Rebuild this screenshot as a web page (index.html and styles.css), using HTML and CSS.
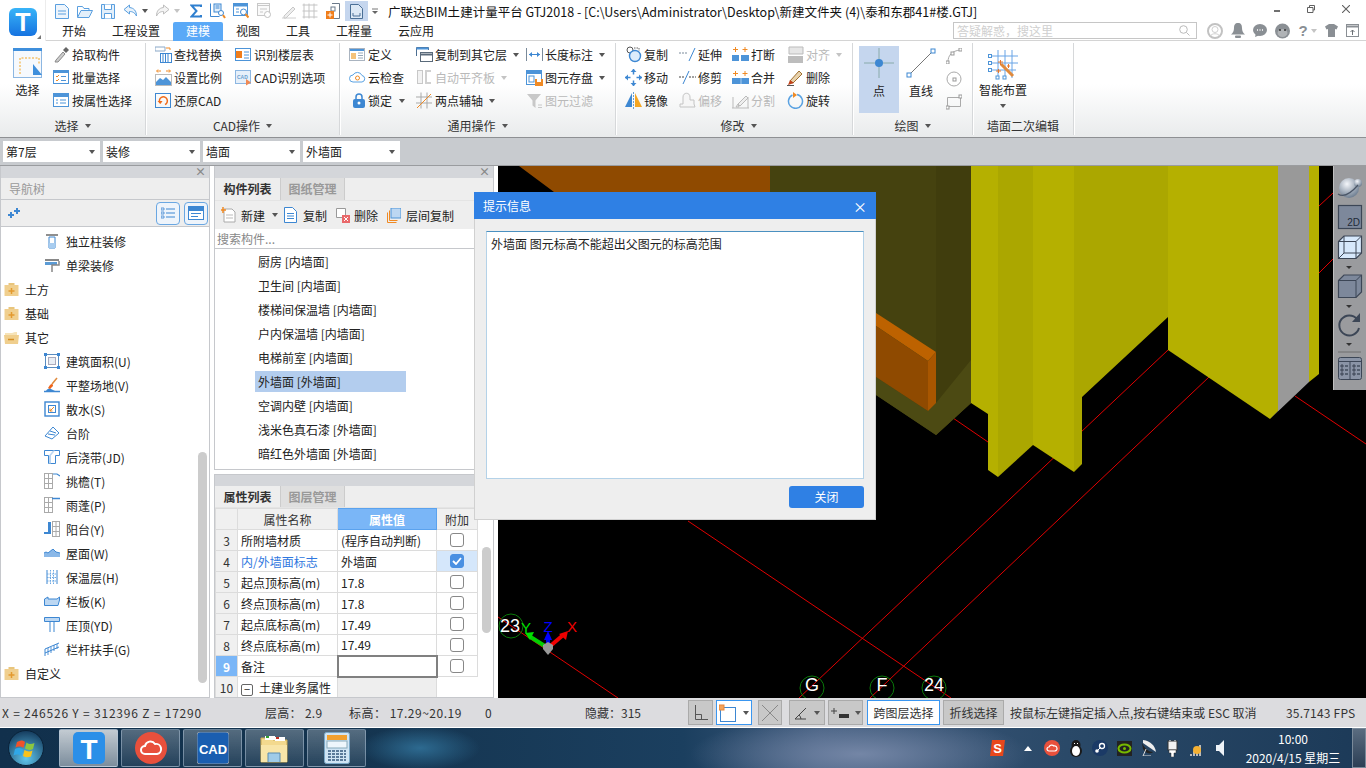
FILE: index.html
```html
<!DOCTYPE html>
<html lang="zh-CN">
<head>
<meta charset="utf-8">
<title>广联达BIM土建计量平台 GTJ2018</title>
<link rel="stylesheet" href="styles.css">
</head>
<body>
<div class="app">

<header class="header">
  <div class="logo">
    <svg width="28" height="28" viewBox="0 0 28 28"><defs><linearGradient id="lg" x1="0" y1="0" x2="0" y2="1"><stop offset="0" stop-color="#38b4f8"/><stop offset="1" stop-color="#1673e0"/></linearGradient></defs><rect width="28" height="28" rx="6" fill="url(#lg)"/><text x="14" y="23" text-anchor="middle" class="logo-t">T</text></svg>
    <i class="logo-corner"></i>
  </div>
  <div class="header-main">
    <div class="title-row">
      <div class="qa">
        <svg width="14" height="15" viewBox="0 0 14 15"><path d="M.5.5h9l4 4v10H.5z" fill="#eef5fc" stroke="#5a9fdf"/><path d="M3 7h8M3 10h8" stroke="#5a9fdf"/></svg>
        <svg width="16" height="15" viewBox="0 0 16 15"><path d="M.5 13V2.500h5l1.500 2h5v2" fill="none" stroke="#5a9fdf"/><path d="M.5 13.500 4 6.500h11.500l-3.500 7z" fill="#e3effa" stroke="#5a9fdf"/></svg>
        <svg width="14" height="15" viewBox="0 0 14 15"><path d="M.5.500h13v14H.5z" fill="#e3effa" stroke="#5a9fdf"/><path d="M3.500.5v5h7v-5M3.500 14.500v-5h7v5" fill="#fff" stroke="#5a9fdf"/></svg>
        <span class="qa-d"><svg width="15" height="14" viewBox="0 0 15 14"><path d="M6.500 1 1 5.500 6.500 10V7.500c3 0 5 1 7 4.500 0-5-2.500-8-7-8.500z" fill="#e8f2fb" stroke="#5a9fdf"/></svg><i class="caret"></i></span>
        <span class="qa-d"><svg width="15" height="14" viewBox="0 0 15 14"><path d="M8.500 1 14 5.500 8.500 10V7.500c-3 0-5 1-7 4.500 0-5 2.500-8 7-8.500z" fill="#f4f4f4" stroke="#bdbdbd"/></svg><i class="caret caret-off"></i></span>
        <svg width="12" height="14" viewBox="0 0 12 14"><path d="M11 3V1.500H1.500L6.500 7l-5 5.500H11V11" fill="none" stroke="#2f7fcf" stroke-width="2"/></svg>
        <svg width="16" height="16" viewBox="0 0 16 16"><path d="M.5.500v13h9" fill="none" stroke="#3d87d2"/><rect x="4" y="1" width="7" height="8" fill="#e3effa" stroke="#3d87d2"/><path d="M5.500 3h4M5.500 5h4" stroke="#3d87d2"/><circle cx="11" cy="10" r="2.500" fill="#fff" stroke="#3d87d2"/><path d="m13 12 2 3" stroke="#f08a24" stroke-width="2"/></svg>
        <svg width="16" height="16" viewBox="0 0 16 16"><rect x=".5" y=".5" width="14" height="12" fill="#fff" stroke="#4d94d8"/><path d="M.5 2h14" stroke="#4d94d8" stroke-width="3"/><path d="M3 6h3M3 9h3" stroke="#4d94d8"/><circle cx="10.500" cy="9" r="3" fill="#fff" stroke="#3d87d2"/><path d="m12.500 11 3 3.500" stroke="#f08a24" stroke-width="2"/></svg>
        <svg width="15" height="16" viewBox="0 0 15 16"><rect x=".5" y=".5" width="12" height="12" fill="#fafafa" stroke="#c8c8c8"/><path d="M.5 2.500h12M3 6h7M3 9h3" stroke="#c8c8c8"/><circle cx="10.500" cy="11.500" r="3" fill="#fff" stroke="#c0c0c0"/></svg>
        <svg width="16" height="15" viewBox="0 0 16 15"><path d="M1 14h14" stroke="#d0d0d0"/><path d="m3 12 9-9 2 2-9 9H3z" fill="#eee" stroke="#c8c8c8"/></svg>
        <svg width="16" height="16" viewBox="0 0 16 16"><path d="M.5 2h15M.5 8h15M.5 14h15M2 .5v15M7 .5v15M12 .5v15" stroke="#c4c4c4" fill="none"/></svg>
        <svg width="14" height="16" viewBox="0 0 14 16"><path d="M6 .5h7.500v15H6" fill="#fff" stroke="#6b7a8a"/><rect x="5" y="4" width="4" height="4" fill="#fff" stroke="#6b7a8a"/><rect y="8" width="8" height="8" fill="#f07d1a"/><path d="M4 9.500v5M1.500 12h5" stroke="#fff"/></svg>
        <span class="qa-on"><svg width="13" height="15" viewBox="0 0 13 15"><path d="M.5.500h8l4 4v10H.5z" fill="#dce8f5" stroke="#4a6f96"/><path d="M3 9v3h7V9" fill="none" stroke="#4a6f96"/></svg></span>
        <svg width="6" height="7" viewBox="0 0 6 7"><path d="M0 1h6" stroke="#777"/><path d="m0 3 3 3 3-3z" fill="#666"/></svg>
      </div>
      <div class="title">广联达BIM土建计量平台 GTJ2018 - [C:\Users\Administrator\Desktop\新建文件夹 (4)\泰和东郡41#楼.GTJ]</div>
      <div class="win">
        <svg width="6" height="8" viewBox="0 0 6 8"><rect y="5" width="6" height="2" fill="#707070"/></svg>
        <svg width="8" height="8" viewBox="0 0 8 8"><path d="M2.500 2V.5h5V5H6M.5 2.500H6v5H.5z" fill="none" stroke="#606060"/></svg>
        <svg width="8" height="8" viewBox="0 0 8 8"><path d="m0 0 8 8M8 0 0 8" stroke="#606060" stroke-width="1.100"/></svg>
      </div>
    </div>
    <div class="tab-row">
      <nav class="tabs">
        <span class="tab">开始</span><span class="tab">工程设置</span><span class="tab tab-on">建模</span><span class="tab">视图</span><span class="tab">工具</span><span class="tab">工程量</span><span class="tab">云应用</span>
      </nav>
      <div class="search"><span>答疑解惑，搜这里</span><svg width="11" height="11" viewBox="0 0 11 11"><circle cx="4.500" cy="4.500" r="3.800" fill="none" stroke="#bbb"/><path d="m7.500 7.500 3 3" stroke="#bbb"/></svg></div>
      <div class="sys">
        <svg width="16" height="16" viewBox="0 0 16 16"><circle cx="8" cy="8" r="7" fill="#fff" stroke="#c2c2c2" stroke-width="2"/><circle cx="8" cy="6.500" r="3" fill="none" stroke="#d0d0d0"/><path d="M3.500 13c1-3 8-3 9 0" fill="none" stroke="#d0d0d0"/></svg>
        <svg width="14" height="15" viewBox="0 0 14 15"><path d="M7 0c3 0 4 2 4 5 0 3 1 5 3 6.500H0C2 10 3 8 3 5c0-3 1-5 4-5z" fill="#8a8f94"/><rect x="4" y="12.500" width="6" height="2.500" rx="1" fill="#8a8f94"/></svg>
        <svg width="14" height="13" viewBox="0 0 14 13"><ellipse cx="7" cy="6" rx="7" ry="6" fill="#8a8f94"/><path d="M3 9 2 13l5-2z" fill="#8a8f94"/><path d="M4 6h1M6.500 6h1M9 6h1" stroke="#fff" stroke-width="1.500"/></svg>
        <svg width="15" height="16" viewBox="0 0 15 16"><circle cx="7.500" cy="8" r="7.500" fill="#8a8f94"/><ellipse cx="7.500" cy="10" rx="5" ry="4" fill="#b0b3b6"/><circle cx="5" cy="7" r="1" fill="#333"/><circle cx="10" cy="7" r="1" fill="#333"/></svg>
        <span class="help">?<i class="caret caret-off"></i></span>
        <svg width="13" height="13" viewBox="0 0 13 13"><path d="M4 0h5l4 2.500-1.500 3L10 5v8H3V5l-1.500.500L0 2.500z" fill="#8a8f94"/></svg>
        <svg width="13" height="13" viewBox="0 0 13 13"><rect x=".5" y=".5" width="12" height="12" fill="#fff" stroke="#8a8f94"/><path d="M.5 2.500h12" stroke="#8a8f94" stroke-width="2"/><path d="M6.500 11V6M4.500 8l2-2 2 2" fill="none" stroke="#6b7075"/></svg>
      </div>
    </div>
  </div>
</header>

<section class="ribbon">
  <div class="group g1">
    <div class="g-body">
      <div class="big b-sel">
        <svg width="29" height="30" viewBox="0 0 29 30"><rect x=".5" y=".5" width="28" height="29" fill="#f6f9fd" stroke="#8db7e2"/><rect width="29" height="3" fill="#3f8fdc"/><path d="M7 26V10h19v6" fill="none" stroke="#f4a623" stroke-dasharray="2 1.500"/><path d="M20 16l9 11h-9z" fill="#3f8fdc"/></svg>
        <span>选择</span>
      </div>
      <div class="col">
        <div class="r"><svg width="17" height="17" viewBox="0 0 17 17"><path d="m3 14 7-8 2 2-7 8H2z" fill="#ccc" stroke="#8a8a8a"/><path d="m10 4 3-3 3 3-3 3z" fill="#666"/></svg><span>拾取构件</span></div>
        <div class="r"><svg width="17" height="17" viewBox="0 0 17 17"><rect x=".5" y="1.500" width="15" height="13" fill="#fff" stroke="#4d94d8"/><path d="M.5 3h15" stroke="#4d94d8" stroke-width="2"/><path d="m3 7 1 1 2-2M3 11l1 1 2-2" fill="none" stroke="#f08a24"/><path d="M8 7.500h5M8 11.500h5" stroke="#4d94d8"/></svg><span>批量选择</span></div>
        <div class="r"><svg width="17" height="17" viewBox="0 0 17 17"><rect x=".5" y="1.500" width="15" height="13" fill="#fff" stroke="#4d94d8"/><path d="M.5 3.500h15" stroke="#4d94d8" stroke-width="3"/><path d="M3 8h2M7 8h6M3 11h2M7 11h6" stroke="#4d94d8"/></svg><span>按属性选择</span></div>
      </div>
    </div>
    <div class="g-label">选择<i class="caret"></i></div>
  </div>

  <div class="group g2">
    <div class="g-body">
      <div class="col c80">
        <div class="r"><svg width="17" height="17" viewBox="0 0 17 17"><path d="M0 1h10v4H0z" fill="#fff" stroke="#8aa8c8"/><path d="M11 2h4v2" fill="none" stroke="#f08a24"/><rect x="5.500" y="7.500" width="11" height="9" fill="#fff" stroke="#3d87d2"/><path d="M8 7.500v9M10.500 7.500v9M13 7.500v9" stroke="#3d87d2"/></svg><span>查找替换</span></div>
        <div class="r"><svg width="17" height="17" viewBox="0 0 17 17"><path d="M2 2h4M11 2h4M3 .5 1.500 2 3 3.500M14 .5 15.500 2 14 3.500" fill="none" stroke="#f08a24"/><rect x=".5" y="5.500" width="16" height="11" fill="#fff" stroke="#bbb"/><path d="M1 16v-3l4-4 3 2 3-3 5 5v3z" fill="#4d94d8"/></svg><span>设置比例</span></div>
        <div class="r"><svg width="17" height="17" viewBox="0 0 17 17"><rect x=".5" y="1.500" width="15" height="14" fill="none" stroke="#3d87d2"/><path d="M5 11a4 4 0 1 1 5 1.500" fill="none" stroke="#f06a1a" stroke-width="1.500"/><path d="m2.500 9 3 3 2-3z" fill="#f06a1a"/></svg><span>还原CAD</span></div>
      </div>
      <div class="col">
        <div class="r"><svg width="17" height="17" viewBox="0 0 17 17"><rect x=".5" y="2.500" width="15" height="12" fill="#fff" stroke="#4d94d8"/><rect x="1" y="5" width="6" height="7" fill="#f07d1a"/><path d="M9 6h5M9 9h5M9 12h5" stroke="#4d94d8"/></svg><span>识别楼层表</span></div>
        <div class="r"><svg width="17" height="17" viewBox="0 0 17 17"><rect x=".5" y="1.500" width="15" height="13" fill="#e6f0fa" stroke="#8db7e2"/><text x="2" y="10" class="mini-t">CAD</text><path d="M11 10l5 3.500-5 3z" fill="#f08a55"/></svg><span>CAD识别选项</span></div>
      </div>
    </div>
    <div class="g-label">CAD操作<i class="caret"></i></div>
  </div>

  <div class="group g3">
    <div class="g-body">
      <div class="col c67">
        <div class="r"><svg width="17" height="17" viewBox="0 0 17 17"><rect x=".5" y="2.500" width="15" height="12" fill="#fff" stroke="#aab4c0"/><path d="M1 4h14" stroke="#4d94d8" stroke-width="2"/><path d="M9 7h5M9 9.500h5M9 12h5" stroke="#9ab"/><rect x="2" y="7" width="5" height="6" fill="#f4c27a"/></svg><span>定义</span></div>
        <div class="r"><svg width="17" height="17" viewBox="0 0 17 17"><path d="M4 13a3.500 3.500 0 0 1 0-7 5 5 0 0 1 9 .5 3.300 3.300 0 0 1 0 6.500z" fill="#fff" stroke="#5aa2e2"/><circle cx="8.500" cy="9" r="2" fill="none" stroke="#f08a24"/></svg><span>云检查</span></div>
        <div class="r r-lock"><svg width="12" height="15" viewBox="0 0 12 15"><path d="M3 7V4a3 3 0 0 1 6 0v3" fill="none" stroke="#3d87d2" stroke-width="1.500"/><rect y="6" width="12" height="9" rx="2" fill="#3d87d2"/><circle cx="6" cy="10" r="1.500" fill="#fff"/></svg><span>锁定</span><i class="caret"></i></div>
      </div>
      <div class="col c110">
        <div class="r"><svg width="17" height="17" viewBox="0 0 17 17"><path d="M.5 10V1.500h12V4" fill="none" stroke="#4d6f92"/><path d="M.5 1.500h12v2H.5z" fill="#4d94d8"/><rect x="4.500" y="6.500" width="12" height="9" fill="#fff" stroke="#5a6a7a"/><path d="M4.500 8.500h12" stroke="#5a6a7a" stroke-width="2"/></svg><span>复制到其它层</span><i class="caret"></i></div>
        <div class="r off"><svg width="17" height="17" viewBox="0 0 17 17"><rect x="1.500" y="1.500" width="5" height="13" fill="#f2f2f2" stroke="#c8c8c8"/><path d="M9 1h6v2h-4v10h4v2H9z" fill="#d0d0d0"/></svg><span>自动平齐板</span><i class="caret caret-off"></i></div>
        <div class="r"><svg width="17" height="17" viewBox="0 0 17 17"><path d="M5 .5v16M11 .5v16M0 5h16M0 11h16" stroke="#a9a9a9"/><path d="M1 16 15 2" stroke="#f08a24"/></svg><span>两点辅轴</span><i class="caret"></i></div>
      </div>
      <div class="col">
        <div class="r"><svg width="17" height="17" viewBox="0 0 17 17"><path d="M.5 2v13M16.500 2v13" stroke="#7a8a9a"/><path d="M3 8.500h11" stroke="#3d87d2"/><path d="m3 8.500 3-2.500v5zM14 8.500 11 6v5z" fill="#3d87d2"/></svg><span>长度标注</span><i class="caret"></i></div>
        <div class="r"><svg width="17" height="17" viewBox="0 0 17 17"><rect x=".5" y="1.500" width="15" height="14" fill="#fff" stroke="#4d94d8"/><path d="M.5 3.500h15" stroke="#4d94d8" stroke-width="3"/><rect x="3" y="7" width="5" height="6" fill="none" stroke="#4d94d8"/><rect x="9" y="10" width="8" height="7" fill="#f08a24"/><rect x="11" y="10" width="4" height="3" fill="#fff"/></svg><span>图元存盘</span><i class="caret"></i></div>
        <div class="r off"><svg width="17" height="17" viewBox="0 0 17 17"><path d="M1 2h14L9.500 8.500V16L6.500 13.500V8.500z" fill="#c8c8c8"/><path d="M12 13h4M12 15.500h4" stroke="#c8c8c8"/></svg><span>图元过滤</span></div>
      </div>
    </div>
    <div class="g-label">通用操作<i class="caret"></i></div>
  </div>

  <div class="group g4">
    <div class="g-body">
      <div class="col c54">
        <div class="r"><svg width="17" height="17" viewBox="0 0 17 17"><circle cx="5" cy="4" r="3" fill="#fff" stroke="#555"/><circle cx="10" cy="10" r="5.500" fill="#dcecfb" stroke="#3d87d2" stroke-width="1.400"/><path d="M9 2h5v3" fill="none" stroke="#666" stroke-dasharray="1.500 1"/></svg><span>复制</span></div>
        <div class="r"><svg width="17" height="17" viewBox="0 0 17 17"><path d="M8.500 0v17M0 8.500h17" stroke="#3d87d2" stroke-width="1.500"/><path d="m8.500 0-3 3h6zM8.500 17l-3-3h6zM0 8.500l3-3v6zM17 8.500l-3-3v6z" fill="#3d87d2"/><rect x="5.500" y="5.500" width="6" height="6" fill="#fff"/></svg><span>移动</span></div>
        <div class="r"><svg width="17" height="17" viewBox="0 0 17 17"><path d="M0 15 7 1v14z" fill="#3d87d2"/><path d="M10 15V1l7 14z" fill="#f5a623"/><path d="M8.500 0v17" stroke="#6a9fd0" stroke-dasharray="2 1"/></svg><span>镜像</span></div>
      </div>
      <div class="col c53">
        <div class="r"><svg width="17" height="17" viewBox="0 0 17 17"><path d="M0 7h9" stroke="#7a8a9a" stroke-dasharray="2 1"/><path d="m10 15 6-13" stroke="#3d87d2"/></svg><span>延伸</span></div>
        <div class="r"><svg width="17" height="17" viewBox="0 0 17 17"><path d="M0 8h5M10 8h7" stroke="#444" stroke-dasharray="2 1"/><path d="m4 15 6-13" stroke="#3d87d2"/></svg><span>修剪</span></div>
        <div class="r off"><svg width="17" height="17" viewBox="0 0 17 17"><path d="M1 15v-3h3V5c0-5 7-5 7 0v3h4v4l1 3z" fill="#f6f6f6" stroke="#c4c4c4"/></svg><span>偏移</span></div>
      </div>
      <div class="col c55">
        <div class="r"><svg width="17" height="17" viewBox="0 0 17 17"><path d="M0 9h7v6H0zM9 9h8v6H9z" fill="#4d94d8"/><path d="M3.500 1v5M1 3.500h5M13 1v5M10.500 3.500h5" stroke="#f08a24"/></svg><span>打断</span></div>
        <div class="r"><svg width="17" height="17" viewBox="0 0 17 17"><path d="M0 9h17v6H0z" fill="#4d94d8"/><path d="M9 9v6" stroke="#a8cdf0"/><path d="M3.500 2v5M1 4.500h5M13 2v5M10.500 4.500h5" stroke="#f08a24"/></svg><span>合并</span></div>
        <div class="r off"><svg width="17" height="17" viewBox="0 0 17 17"><path d="M0 16h17M1 5v11M16 5v11" stroke="#bbb"/><path d="m6 12 1 3h-3zM6 12l8-8 2 2-8 8z" fill="#eee" stroke="#bbb"/></svg><span>分割</span></div>
      </div>
      <div class="col">
        <div class="r off"><svg width="17" height="17" viewBox="0 0 17 17"><path d="M2 1h14v7H2z" fill="#e6e6e6" stroke="#bbb"/><path d="M1 10h15v7H1z" fill="#bdbdbd"/></svg><span>对齐</span><i class="caret caret-off"></i></div>
        <div class="r"><svg width="17" height="17" viewBox="0 0 17 17"><path d="m3 12 9-10 3 3-9 9z" fill="#e8d2ac" stroke="#a07030"/><path d="m1 16 2-5 4 3z" fill="#c0421a"/><path d="M0 16.500h7" stroke="#555"/></svg><span>删除</span></div>
        <div class="r"><svg width="17" height="17" viewBox="0 0 17 17"><path d="M10 2.500A7 7 0 1 1 5.500 3" fill="none" stroke="#5aa2e2" stroke-width="1.500"/><path d="M6 0v6l4-3z" fill="#f08a24"/></svg><span>旋转</span></div>
      </div>
    </div>
    <div class="g-label">修改<i class="caret"></i></div>
  </div>

  <div class="group g5">
    <div class="g-body">
      <div class="big b-pt">
        <svg width="30" height="30" viewBox="0 0 30 30"><path d="M15 0v30M0 15h30" stroke="#8aa" /><circle cx="15" cy="15" r="4" fill="#3d87d2"/></svg>
        <span>点</span>
      </div>
      <div class="big b-line">
        <svg width="30" height="30" viewBox="0 0 30 30"><path d="M3 27 27 3" stroke="#777"/><rect x="25" y="1" width="4" height="4" fill="#fff" stroke="#3d87d2"/><rect x="1" y="25" width="4" height="4" fill="#fff" stroke="#3d87d2"/></svg>
        <span>直线</span>
      </div>
      <div class="col c-geo">
        <svg width="16" height="16" viewBox="0 0 16 16"><path d="M2 14C2 7 6 3 14 2" fill="none" stroke="#aaa"/><rect x="0" y="13" width="3" height="3" fill="#fff" stroke="#999"/><rect x="5" y="4" width="3" height="3" fill="#fff" stroke="#999"/><rect x="13" y="0" width="3" height="3" fill="#fff" stroke="#999"/></svg>
        <svg width="16" height="16" viewBox="0 0 16 16"><circle cx="8" cy="8" r="7" fill="none" stroke="#aaa"/><rect x="7" y="7" width="3" height="3" fill="#fff" stroke="#999"/></svg>
        <svg width="16" height="16" viewBox="0 0 16 16"><path d="M1.500 3.500h13v9h-13z" fill="none" stroke="#aaa"/><rect x="0" y="12" width="3" height="3" fill="#fff" stroke="#999"/><rect x="13" y="1" width="3" height="3" fill="#fff" stroke="#999"/></svg>
      </div>
    </div>
    <div class="g-label">绘图<i class="caret"></i></div>
  </div>

  <div class="group g6">
    <div class="g-body">
      <div class="big b-smart">
        <svg width="30" height="30" viewBox="0 0 30 30"><path d="M10 0v28M17 0v28M24 0v28M2 6h28M2 13h28M2 20h26" stroke="#68a4e6"/><rect x=".5" y="4.500" width="3" height="3" fill="#fff" stroke="#4d94d8"/><rect x=".5" y="11.500" width="3" height="3" fill="#fff" stroke="#4d94d8"/><rect x=".5" y="18.500" width="3" height="3" fill="#fff" stroke="#4d94d8"/><rect x="8" y="26" width="3" height="3" fill="#fff" stroke="#4d94d8"/><rect x="15" y="26" width="3" height="3" fill="#fff" stroke="#4d94d8"/><path d="m13 14 12 12" stroke="#e08a3c" stroke-width="3"/><path d="M10 12h5M12.500 10v5M8 21h5M10.500 19v4M19 16h3M20.500 14v4" stroke="#e8782a"/></svg>
        <span>智能布置</span>
        <i class="caret"></i>
      </div>
    </div>
    <div class="g-label">墙面二次编辑</div>
  </div>
</section>

<section class="selects">
  <div class="sel">第7层<i class="caret"></i></div>
  <div class="sel">装修<i class="caret"></i></div>
  <div class="sel">墙面<i class="caret"></i></div>
  <div class="sel">外墙面<i class="caret"></i></div>
</section>

<main class="main">
  <aside class="nav panel">
    <div class="pane-bar"><span class="x">×</span></div>
    <div class="nav-title">导航树</div>
    <div class="nav-tools">
      <svg class="plus" width="13" height="10" viewBox="0 0 13 10"><path d="M3 4v6M0 7h6M9 0v6M6 3h6" stroke="#3d87d2" stroke-width="2"/></svg>
      <span class="tool-btn"><svg width="14" height="14" viewBox="0 0 14 14"><path d="M0 2h3v2H0zM0 6h3v2H0zM0 10h3v2H0z" fill="none" stroke="#3d87d2" stroke-width=".8"/><path d="M5 3h9M5 7h9M5 11h9" stroke="#3d87d2"/></svg></span>
      <span class="tool-btn"><svg width="16" height="14" viewBox="0 0 16 14"><rect x=".5" y=".5" width="15" height="13" fill="#fff" stroke="#3d87d2"/><path d="M.5 3h15" stroke="#3d87d2" stroke-width="4"/><path d="M3 7.500h10M3 10.500h7" stroke="#3d87d2"/></svg></span>
    </div>
    <div class="tree">
      <div class="t l2"><svg width="16" height="16" viewBox="0 0 16 16"><path d="M2 1h12v2H2z" fill="#8f8f8f"/><path d="M5 4h6v11H5z" fill="#fff" stroke="#3d87d2"/><path d="M5 10h6v5H5z" fill="#a8cdf0"/></svg><span>独立柱装修</span></div>
      <div class="t l2"><svg width="16" height="16" viewBox="0 0 16 16"><path d="M1 2h14v2H1z" fill="#888"/><path d="M1 5h12v3H1z" fill="#5b9bd5"/><path d="M15 4v4H8v7" fill="none" stroke="#888" stroke-width="1.500"/></svg><span>单梁装修</span></div>
      <div class="t l1"><svg width="14" height="13" viewBox="0 0 14 13"><path d="M0 2h14v11H0z" fill="#f0cf8e"/><path d="M4 0h6v2H4z" fill="#e8c57c"/><path d="M7 5v6M4 8h6" stroke="#e39a2f" stroke-width="1.500"/></svg><span>土方</span></div>
      <div class="t l1"><svg width="14" height="13" viewBox="0 0 14 13"><path d="M0 2h14v11H0z" fill="#f0cf8e"/><path d="M4 0h6v2H4z" fill="#e8c57c"/><path d="M7 5v6M4 8h6" stroke="#e39a2f" stroke-width="1.500"/></svg><span>基础</span></div>
      <div class="t l1"><svg width="15" height="13" viewBox="0 0 15 13"><path d="M1 2h7l3-1h2v5H1z" fill="#f6e3b8"/><path d="M0 4h15l-1 9H1z" fill="#f0cf8e"/><path d="M4 8.500h6" stroke="#d68d22" stroke-width="1.500"/></svg><span>其它</span></div>
      <div class="t l2"><svg width="16" height="16" viewBox="0 0 16 16"><rect x="1.500" y="1.500" width="13" height="13" fill="#fff" stroke="#5a8cc0"/><rect x="4.500" y="4.500" width="7" height="7" fill="#e8edf4" stroke="#aab"/><path d="M0 0h3v3H0zM13 0h3v3h-3zM0 13h3v3H0zM13 13h3v3h-3z" fill="#3d87d2"/></svg><span>建筑面积(U)</span></div>
      <div class="t l2"><svg width="16" height="16" viewBox="0 0 16 16"><path d="M0 14.500h16" stroke="#3d87d2" stroke-width="1.500"/><path d="M2 14c1-2 3-3 5-2l4 2z" fill="#3d87d2"/><path d="M6 8c2-2 3-1 3 1L6 12 4 11z" fill="#f0651a"/><path d="m8 7 5-6" stroke="#e08a3c" stroke-width="1.500"/></svg><span>平整场地(V)</span></div>
      <div class="t l2"><svg width="16" height="16" viewBox="0 0 16 16"><rect x="1" y="1" width="14" height="14" fill="none" stroke="#3d87d2" stroke-width="1.400"/><rect x="4.500" y="4.500" width="7" height="7" fill="#fff" stroke="#3d87d2"/><path d="M10 6 6 10M6 7.500V10h2.500" fill="none" stroke="#f08a24"/></svg><span>散水(S)</span></div>
      <div class="t l2"><svg width="16" height="14" viewBox="0 0 16 14"><path d="M1 10 9 1l6 6-7 6z" fill="#fff" stroke="#3d87d2"/><path d="M4 8l7 1M6 5l6 2" stroke="#3d87d2"/></svg><span>台阶</span></div>
      <div class="t l2"><svg width="16" height="16" viewBox="0 0 16 16"><path d="M.5 1.500h15v5h-4v8h-7v-8h-4z" fill="#fff" stroke="#3d87d2"/><path d="M5 6.500 9 1.500h2l-4 5v8H5z" fill="#bcd7f2"/></svg><span>后浇带(JD)</span></div>
      <div class="t l2"><svg width="16" height="16" viewBox="0 0 16 16"><rect x=".5" y=".5" width="8" height="15" fill="#fff" stroke="#aaa"/><path d="M.5 5.500h8M.5 10.500h8M4.500 .5v15" stroke="#aaa"/><path d="M9 1h4l3 2" fill="none" stroke="#3d87d2" stroke-width="1.200"/></svg><span>挑檐(T)</span></div>
      <div class="t l2"><svg width="16" height="16" viewBox="0 0 16 16"><rect x=".5" y=".5" width="8" height="15" fill="#fff" stroke="#aaa"/><path d="M.5 5.500h8M.5 10.500h8M4.500 .5v15" stroke="#aaa"/><path d="M8 1.500h8" stroke="#3d87d2" stroke-width="1.500"/></svg><span>雨蓬(P)</span></div>
      <div class="t l2"><svg width="16" height="16" viewBox="0 0 16 16"><rect x="8.500" y=".5" width="7" height="15" fill="#fff" stroke="#aaa"/><path d="M8.500 5.500h7M8.500 10.500h7M12 .5v15" stroke="#aaa"/><path d="M4 1h3v12H0v-2h4z" fill="#3d87d2"/></svg><span>阳台(Y)</span></div>
      <div class="t l2"><svg width="16" height="8" viewBox="0 0 16 8"><path d="M0 8V4l2-1 2 1 5-4 3 3 4 1v4z" fill="#8ab8e8"/><path d="M0 4l2-1 2 1 5-4 3 3 4 1" fill="none" stroke="#3d87d2"/></svg><span>屋面(W)</span></div>
      <div class="t l2"><svg width="16" height="16" viewBox="0 0 16 16"><path d="M3 1v14M13 1v14" stroke="#3d87d2"/><path d="M6.500 1v14M9.500 1v14M3 5h10M3 8.500h10M3 12h10" stroke="#6aa7e2" stroke-dasharray="1.500 1"/></svg><span>保温层(H)</span></div>
      <div class="t l2"><svg width="16" height="10" viewBox="0 0 16 10"><path d="M.5 3 4 1v2h9l2.500-2v3L14 9.500H.5z" fill="#bcd7f2" stroke="#3d87d2"/></svg><span>栏板(K)</span></div>
      <div class="t l2"><svg width="16" height="16" viewBox="0 0 16 16"><path d="M.5 .5h15v4H.5z" fill="#bcd7f2" stroke="#3d87d2"/><path d="M6 5v10M10 5v10" stroke="#3d87d2"/></svg><span>压顶(YD)</span></div>
      <div class="t l2"><svg width="16" height="16" viewBox="0 0 16 16"><path d="M1 15V8l14-6M1 12l14-6" fill="none" stroke="#3d87d2"/><path d="M4 7v7M7 6v6M10 4v6M13 3v5" stroke="#3d87d2" stroke-width=".9"/></svg><span>栏杆扶手(G)</span></div>
      <div class="t l1 l1b"><svg width="14" height="13" viewBox="0 0 14 13"><path d="M0 2h14v11H0z" fill="#f0cf8e"/><path d="M4 0h6v2H4z" fill="#e8c57c"/><path d="M7 5v6M4 8h6" stroke="#e39a2f" stroke-width="1.500"/></svg><span>自定义</span></div>
      <i class="nav-scroll"></i>
    </div>
  </aside>

  <div class="mid">
    <section class="panel comp">
      <div class="pane-bar"><span class="x">×</span></div>
      <div class="ptabs"><span class="ptab on">构件列表</span><span class="ptab">图纸管理</span></div>
      <div class="ctools">
        <span class="ct ct-new"><svg width="15" height="16" viewBox="0 0 15 16"><path d="M3 2h8l3 3v10H3z" fill="#fff" stroke="#aaa"/><path d="M5 8h7M5 11h7" stroke="#bbb"/><path d="M2 0v6M0 3h5" stroke="#f08a24" stroke-width="1.500"/></svg><span>新建</span><i class="caret"></i></span>
        <span class="ct ct-copy"><svg width="13" height="16" viewBox="0 0 13 16"><path d="M.5 .5h8l4 4v11H.5z" fill="#fff" stroke="#3d87d2"/><path d="M3 6.500h7M3 9h7M3 11.500h7" stroke="#3d87d2"/></svg><span>复制</span></span>
        <span class="ct ct-del"><svg width="14" height="15" viewBox="0 0 14 15"><path d="M.5 .5h9v9h-9z" fill="#fff" stroke="#999"/><rect x="6" y="7" width="8" height="8" fill="#e9686a"/><path d="m8 9 4 4M12 9l-4 4" stroke="#fff"/></svg><span>删除</span></span>
        <span class="ct ct-floor"><svg width="14" height="15" viewBox="0 0 14 15"><path d="M.5 4.500v10h9" fill="none" stroke="#f08a24"/><path d="M2.500 2.500v10h8" fill="none" stroke="#f08a24"/><rect x="4" y="0" width="10" height="10" fill="#bcd7f2" stroke="#4d94d8"/></svg><span>层间复制</span></span>
      </div>
      <div class="csearch">搜索构件...</div>
      <div class="clist">
        <div class="ci">厨房 [内墙面]</div>
        <div class="ci">卫生间 [内墙面]</div>
        <div class="ci">楼梯间保温墙 [内墙面]</div>
        <div class="ci">户内保温墙 [内墙面]</div>
        <div class="ci">电梯前室 [内墙面]</div>
        <div class="ci ci-on">外墙面 [外墙面]</div>
        <div class="ci">空调内壁 [内墙面]</div>
        <div class="ci">浅米色真石漆 [外墙面]</div>
        <div class="ci">暗红色外墙面 [外墙面]</div>
      </div>
    </section>
    <section class="panel props">
      <div class="pane-bar"></div>
      <div class="ptabs"><span class="ptab on">属性列表</span><span class="ptab">图层管理</span></div>
      <div class="tbl-wrap">
        <table class="tbl">
          <thead><tr><th class="n"></th><th>属性名称</th><th class="hv">属性值</th><th>附加</th></tr></thead>
          <tbody>
            <tr><td class="n">3</td><td>所附墙材质</td><td>(程序自动判断)</td><td class="c"><i class="cb"></i></td></tr>
            <tr><td class="n">4</td><td class="link">内/外墙面标志</td><td>外墙面</td><td class="c c-on"><i class="cb cb-on"><svg width="10" height="8" viewBox="0 0 10 8"><path d="m1 4 3 3 5-6" fill="none" stroke="#fff" stroke-width="1.800"/></svg></i></td></tr>
            <tr><td class="n">5</td><td>起点顶标高(m)</td><td>17.8</td><td class="c"><i class="cb"></i></td></tr>
            <tr><td class="n">6</td><td>终点顶标高(m)</td><td>17.8</td><td class="c"><i class="cb"></i></td></tr>
            <tr><td class="n">7</td><td>起点底标高(m)</td><td>17.49</td><td class="c"><i class="cb"></i></td></tr>
            <tr><td class="n">8</td><td>终点底标高(m)</td><td>17.49</td><td class="c"><i class="cb"></i></td></tr>
            <tr><td class="n n-on">9</td><td>备注</td><td class="edit"></td><td class="c"><i class="cb"></i></td></tr>
            <tr><td class="n">10</td><td class="grp"><i class="minus">−</i>土建业务属性</td><td class="gv"></td><td class="blank"></td></tr>
          </tbody>
        </table>
        <i class="tbl-scroll"></i>
      </div>
    </section>
  </div>

  <div class="view">
    <svg class="canvas" viewBox="498 166 868 532" width="868" height="532">
      <g class="red">
        <path d="M1168 350 799 698M1209 377 870 698M688 521 951 698M953 418 988 442M1295 396 1366 444M498 617 618 698M1319 206 1333 193M1319 273 1333 259"/>
      </g>
      <path d="M519 166H770V400H620L554 192z" fill="#8f4a00"/>
      <path d="M770 166H971V403L936 435 876 395V300L770 200z" fill="#45420f"/>
      <path d="M936 166h35v237l-35 32z" fill="#403d0d"/>
      <path d="M876 377 928 411 936 403 971 360V403L936 435 876 395z" fill="#4c4a13"/>
      <path d="M876 313 936 352 928 361 876 326z" fill="#bd6200"/>
      <path d="M876 326 928 361V411L876 377z" fill="#8f4a00"/>
      <path d="M928 361 936 352V403L928 411z" fill="#a85600"/>
      <path d="M971 166H998V477L988 470V414L971 403z" fill="#b5b000"/>
      <path d="M998 166H1033V445L998 477z" fill="#aba700"/>
      <path d="M1033 166H1074V472L1033 445z" fill="#b5b000"/>
      <path d="M1074 166H1168V317L1082 397V464L1074 472z" fill="#aba700"/>
      <path d="M1168 166H1278V411L1270 419 1168 350z" fill="#b5b000"/>
      <path d="M1278 166H1309V382L1270 419 1278 411z" fill="#999"/>
      <path d="M1309 166H1319V374L1309 382z" fill="#b5b000"/>
      <g class="bubble">
        <circle cx="511" cy="626" r="12"/><circle cx="812" cy="688" r="12"/><circle cx="882" cy="688" r="12"/><circle cx="934" cy="688" r="12"/>
      </g>
      <g class="bubble-t">
        <text x="510" y="632">23</text><text x="812" y="691">G</text><text x="882" y="691">F</text><text x="934" y="691">24</text>
      </g>
      <path d="M548 648 529 636" stroke="#00d000" stroke-width="4"/><path d="m525 633 9-1-4 8z" fill="#00e000"/>
      <path d="M548 648 562 636" stroke="#f00000" stroke-width="4"/><path d="m568 631-2 9-7-6z" fill="#f00000"/>
      <path d="M548 648V638" stroke="#0000f0" stroke-width="4"/><path d="m548 631 4 9h-8z" fill="#0000ff"/>
      <path d="m543 645 5-3 5 3v4l-5 6-5-6z" fill="#999"/>
      <text x="526" y="633" class="ax ax-y">Y</text><text x="548" y="632" class="ax ax-z">Z</text><text x="572" y="632" class="ax ax-x">X</text>
    </svg>
    <div class="vtools">
      <svg width="33" height="224" viewBox="0 0 33 224">
        <defs><radialGradient id="sp" cx=".4" cy=".3" r=".8"><stop offset="0" stop-color="#f4f6fa"/><stop offset="1" stop-color="#5d6f84"/></radialGradient></defs>
        <circle cx="15" cy="22" r="10" fill="url(#sp)"/><circle cx="24" cy="17" r="4" fill="url(#sp)"/><path d="M4 28c6 4 14-2 20-9" fill="none" stroke="#4a5566" stroke-width="1.200"/>
        <rect x="4.500" y="39.500" width="23" height="23" fill="#7d889b" stroke="#3c4656" stroke-width="1.200"/><text x="26" y="60" class="v2d">2D</text>
        <path d="M4.500 75.500 10 70h17.500v17L22 92.500H4.500z" fill="#d7e8fb" stroke="#3c4656" stroke-width="1.200"/><path d="M4.500 75.500H22v17M22 75.500l5.500-5.500M10 70v17H27.500M4.500 92.500 10 87" fill="none" stroke="#3c4656"/>
        <path d="m12 100 3 3 3-3z" fill="#333"/>
        <path d="M4.500 114.500 10 109h17.500v17L22 131.500H4.500z" fill="#7d889b" stroke="#3c4656" stroke-width="1.200"/><path d="M4.500 114.500H22v17M22 114.500l5.500-5.500" fill="none" stroke="#3c4656"/>
        <path d="m12 139 3 3 3-3z" fill="#333"/>
        <path d="M23 153a10 10 0 1 0 2 9" fill="none" stroke="#3c4656" stroke-width="2"/><path d="M26 147v9h-8z" fill="#3c4656"/>
        <path d="m12 177 3 3 3-3z" fill="#333"/>
        <path d="M4 186h23" stroke="#6f6f6f"/>
        <rect x="4.500" y="191.500" width="23" height="22" rx="2" fill="#8a94a6" stroke="#3c4656"/><path d="M4.500 195.500h23M16 196v17" stroke="#3c4656"/><path d="M7 199h2v2H7zM7 203h2v2H7zM7 207h2v2H7zM19 199h2v2h-2zM19 203h2v2h-2zM19 207h2v2h-2z" fill="none" stroke="#1f2a38" stroke-width=".7"/><path d="M11 200h3M11 204h3M11 208h3M23 200h3M23 204h3M23 208h3" stroke="#1f2a38"/>
      </svg>
    </div>
  </div>

  <div class="dialog">
    <div class="dlg-title"><span>提示信息</span><span class="dlg-x">×</span></div>
    <div class="dlg-body">外墙面 图元标高不能超出父图元的标高范围</div>
    <div class="dlg-foot"><span class="dlg-btn">关闭</span></div>
  </div>
</main>

<footer class="status">
  <span class="st-xyz">X = 246526 Y = 312396 Z = 17290</span>
  <span class="st-h">层高： 2.9</span>
  <span class="st-b">标高： 17.29~20.19</span>
  <span class="st-0">0</span>
  <span class="st-hide">隐藏：315</span>
  <span class="sb sb1"><svg width="14" height="16" viewBox="0 0 14 16"><path d="M1.500 0v14.500H14M1.500 9.500h6v5" fill="none" stroke="#555"/></svg></span>
  <span class="sb sb2"><svg width="18" height="18" viewBox="0 0 18 18"><rect x="1.500" y="3.500" width="15" height="14" fill="#fff" stroke="#3d87d2"/><rect x="0" y="1" width="5" height="5" fill="#f4a35a" stroke="#e8863a"/></svg><i class="caret"></i></span>
  <span class="sb sb3"><svg width="16" height="16" viewBox="0 0 16 16"><path d="m0 0 16 16M16 0 0 16" stroke="#888"/></svg></span>
  <span class="sb sb4"><svg width="14" height="14" viewBox="0 0 14 14"><path d="M1 13h11M1 13 12 2" stroke="#444" fill="none"/><path d="M7 13a6 6 0 0 0-2-4" stroke="#444" fill="none"/></svg><i class="caret"></i></span>
  <span class="sb sb5"><svg width="18" height="14" viewBox="0 0 18 14"><path d="M3 2v6M0 5h6" stroke="#444"/><rect x="8" y="8" width="10" height="4" fill="#333"/></svg><i class="caret"></i></span>
  <span class="sb sb6">跨图层选择</span>
  <span class="sb sb7">折线选择</span>
  <span class="st-msg">按鼠标左键指定插入点,按右键结束或 ESC 取消</span>
  <span class="st-fps">35.7143 FPS</span>
</footer>

<footer class="taskbar">
  <span class="orb"><svg width="36" height="36" viewBox="0 0 36 36"><defs><radialGradient id="og" cx=".5" cy=".8" r=".8"><stop offset="0" stop-color="#5fc7ef"/><stop offset="1" stop-color="#143a5c"/></radialGradient></defs><circle cx="18" cy="18" r="17.500" fill="url(#og)" stroke="#0a2238"/><path d="M9 12c3-2 6-2 8 0l-1.500 6c-2-1.500-5-2-8-.5z" fill="#f0522a"/><path d="M18.500 12.500c2.500 2 5 2 8 .5l-1.500 6c-3 1.500-5.500 1-8-.5z" fill="#8cc63f"/><path d="M7 19c3-1.500 6-1 8 .5L13.500 26c-2-1.500-5-2-8-.5z" fill="#30a8e8"/><path d="M16.500 20c2.500 1.500 5 2 8 .5l-1.500 6c-3 1-5.500 1-8-.5z" fill="#f8c21c"/></svg></span>
  <span class="tb tb-on"><svg width="32" height="32" viewBox="0 0 32 32"><rect width="32" height="32" rx="5" fill="#2b8fe8"/><text x="16" y="27" text-anchor="middle" class="tb-t">T</text></svg></span>
  <span class="tb"><svg width="32" height="32" viewBox="0 0 32 32"><circle cx="16" cy="16" r="16" fill="#e8503c"/><path d="M10 22a4 4 0 0 1 0-8 5.500 5.500 0 0 1 10-2 5 5 0 0 1 2 10z" fill="none" stroke="#fff" stroke-width="2"/></svg></span>
  <span class="tb"><svg width="32" height="32" viewBox="0 0 32 32"><rect width="32" height="32" rx="3" fill="#1a5eb0" stroke="#8a9aaa"/><text x="16" y="22" text-anchor="middle" class="tb-cad">CAD</text></svg></span>
  <span class="tb"><svg width="30" height="30" viewBox="0 0 30 30"><path d="M1 5h10l2 2h14v22H1z" fill="#f3d98e" stroke="#c8a850"/><path d="M5 3h10v4H5z" fill="#fff"/><path d="M6 3h3v2H6z" fill="#30a030"/><path d="M15 4h10v4H15z" fill="#fff"/><path d="M16 4h3v2h-3z" fill="#c03020"/><path d="M1 12h26v17H1z" fill="#f8e5a8"/><path d="M8 29V20h12v9" fill="#9fcbe8" stroke="#5a8cb0"/></svg></span>
  <span class="tb"><svg width="26" height="32" viewBox="0 0 26 32"><rect x=".5" y=".5" width="25" height="31" rx="2" fill="#cfe4f4" stroke="#7aa8c8"/><rect x="3" y="3" width="20" height="5" fill="#f0a030"/><rect x="3" y="9" width="20" height="7" fill="#eef6fc" stroke="#8ab"/><path d="M4 19h18M4 22h18M4 25h18M4 28h18" stroke="#5a7a9a" stroke-width="2" stroke-dasharray="3 1"/></svg></span>
  <div class="tray">
    <svg class="t-s" width="15" height="16" viewBox="0 0 15 16"><path d="M2 0h13l-2 16H0z" fill="#e8471c"/><text x="7.500" y="13" text-anchor="middle" class="tray-s">S</text></svg>
    <i class="t-arrow"></i>
    <svg width="16" height="16" viewBox="0 0 16 16"><circle cx="8" cy="8" r="8" fill="#e8503c"/><path d="M5 11a2 2 0 0 1 0-4 3 3 0 0 1 5-1 2.500 2.500 0 0 1 1 5z" fill="none" stroke="#fff" stroke-width="1.200"/></svg>
    <svg width="14" height="17" viewBox="0 0 14 17"><ellipse cx="7" cy="5" rx="4.500" ry="5" fill="#1a1a1a"/><ellipse cx="7" cy="11" rx="6" ry="6" fill="#1a1a1a"/><ellipse cx="7" cy="11" rx="4" ry="5" fill="#fff"/><path d="M5 3.500h1M8 3.500h1" stroke="#fff"/></svg>
    <svg width="16" height="16" viewBox="0 0 16 16"><circle cx="8" cy="8" r="8" fill="#1b3a66"/><circle cx="10" cy="6" r="2.500" fill="none" stroke="#fff" stroke-width="1.300"/><circle cx="5" cy="11" r="1.800" fill="#fff"/><path d="m5 11 4-4" stroke="#fff"/></svg>
    <svg width="15" height="15" viewBox="0 0 15 15"><rect width="15" height="15" fill="#222"/><ellipse cx="7.500" cy="7.500" rx="6" ry="4" fill="none" stroke="#76b900" stroke-width="2"/><circle cx="7.500" cy="7.500" r="1.500" fill="#76b900"/></svg>
    <svg width="15" height="16" viewBox="0 0 15 16"><path d="M2 0c8 1 12 6 13 12L2 3z" fill="#eee"/><path d="M1 3c3 6 7 9 11 9-3 3-8 1-10-3z" fill="#222"/><path d="M5 9 2 16h8" fill="none" stroke="#ddd"/></svg>
    <svg width="11" height="17" viewBox="0 0 11 17"><rect x="1" y="1" width="9" height="9" fill="#f2f2f2" stroke="#333"/><path d="M3 1V0M8 1V0" stroke="#fff"/><path d="M2 10h7v3H7v4H4v-4H2z" fill="#fff" stroke="#333" stroke-width=".5"/></svg>
    <svg width="14" height="15" viewBox="0 0 14 15"><path d="M1 13h2v2H1zM4 10h2v5H4zM7 7h2v8H7zM10 4h2v11h-2z" fill="#bbb"/><circle cx="8" cy="9" r="4" fill="#f5b133"/></svg>
    <svg width="8" height="16" viewBox="0 0 8 16"><path d="M0 5h3l5-5v16l-5-5H0z" fill="#eef3f7"/></svg>
  </div>
  <div class="clock"><span>10:00</span><span>2020/4/15 星期三</span></div>
  <i class="show-desk"></i>
</footer>
</div>
</body>
</html>
```

FILE: styles.css
```css
* { box-sizing: border-box; }
html, body { margin: 0; padding: 0; }
body { font-family: "Noto Sans CJK SC", "Noto Sans", sans-serif; font-size: 12px; color: #222; background: #fff; overflow: hidden; }
i { display: block; font-style: normal; }
svg { flex: none; display: block; }
.app { width: 1366px; height: 768px; display: flex; flex-direction: column; position: relative; overflow: hidden; }

.caret { width: 0; height: 0; border-left: 3.5px solid transparent; border-right: 3.5px solid transparent; border-top: 4px solid #555; flex: none; display: inline-block; }
.caret-off { border-top-color: #c4c4c4; }

/* header */
.header { height: 41px; display: flex; flex: none; border-bottom: 1px solid #d4d4d4; }
.logo { width: 46px; position: relative; padding: 8px 0 0 9px; background: #fff; border-right: 1px solid #ececec; margin-bottom: -1px; }
.logo-t { font: bold 25px "Liberation Sans", sans-serif; fill: #fff; }
.logo-corner { position: absolute; left: 37px; top: 35px; width: 0; height: 0; border-bottom: 4px solid #777; border-left: 4px solid transparent; }
.header-main { flex: 1; display: flex; flex-direction: column; min-width: 0; }
.title-row { height: 22px; display: flex; align-items: center; }
.qa { display: grid; grid-template-columns: 22px 24px 22px 32px 35px 20px 23px 24px 24px 21px 24px 19px 27px 16px; margin-left: 9px; align-items: center; }
.qa-d { display: flex; align-items: center; gap: 4px; }
.qa-on { width: 23px; height: 20px; background: #c5d6ee; display: flex; align-items: center; justify-content: center; }
.title { flex: 1; font-size: 12.5px; white-space: nowrap; color: #111; letter-spacing: .015px; }
.win { display: flex; gap: 27px; align-items: flex-start; padding: 0 15px 4px 0; width: 92px; }
.tab-row { height: 18px; display: flex; align-items: flex-start; }
.tabs { display: flex; margin-left: 3px; }
.tab { padding: 0 13px; height: 19px; line-height: 18px; color: #222; }
.tab-on { background: #5aa9f7; color: #fff; border-radius: 2px 2px 0 0; }
.search { margin-left: auto; width: 244px; height: 17px; border: 1px solid #c6c6c6; display: flex; align-items: center; justify-content: space-between; padding: 0 6px 0 3px; color: #cfcfcf; background: #fff; }
.sys { display: flex; align-items: center; margin: 0 7px 0 10px; width: 152px; justify-content: space-between; height: 17px; }
.help { display: flex; align-items: center; gap: 3px; color: #8a8f94; font-size: 15px; font-weight: bold; line-height: 16px; font-family: "Liberation Sans", sans-serif; }

/* ribbon */
.ribbon { height: 97px; flex: none; display: flex; background: linear-gradient(#fff 0, #fff 45%, #e9ebec 100%); border-bottom: 1px solid #8e9093; }
.group { display: flex; flex-direction: column; height: 92px; margin-top: 2px; border-right: 1px solid #d6d8da; box-shadow: 1px 0 0 #fff; }
.g1 { width: 146px; }
.g2 { width: 194px; padding-left: 9px; }
.g3 { width: 276px; padding-left: 9px; }
.g4 { width: 237px; padding-left: 9px; }
.g5 { width: 120px; padding-left: 6px; }
.g6 { width: 101px; }
.g-body { height: 71px; display: flex; }
.g-label { flex: 1; display: flex; align-items: center; justify-content: center; gap: 6px; padding-top: 2px; color: #333; }
.g2 .g-label, .g3 .g-label { margin-left: -9px; }
.g5 .g-label { margin-left: -6px; }
.col { display: flex; flex-direction: column; }
.c80 { width: 80px; }
.c67 { width: 67px; }
.c110 { width: 110px; }
.c54 { width: 54px; }
.c53 { width: 53px; }
.c55 { width: 55px; }
.r { display: flex; align-items: center; height: 23px; gap: 2px; white-space: nowrap; }
.r .caret { margin-left: 4px; }
.r-lock { padding-left: 4px; gap: 3px; }
.off { color: #b9b9b9; }
.mini-t { font: bold 5px "Liberation Sans", sans-serif; fill: #6a9fd0; }
.big { display: flex; flex-direction: column; align-items: center; }
.big span { white-space: nowrap; }
.b-sel { width: 53px; padding: 5px 0 0 2px; gap: 3px; }
.b-pt { width: 40px; height: 67px; background: #c5d6ee; margin-top: 3px; padding-top: 2px; gap: 4px; }
.b-line { width: 36px; margin-left: 4px; padding-top: 5px; gap: 4px; }
.b-smart { width: 60px; padding-top: 7px; gap: 1px; }
.b-smart .caret { margin-top: 5px; }
.c-geo { margin-left: 7px; gap: 7px; padding-top: 5px; }

/* selects */
.selects { height: 27px; flex: none; background: #c8cbcf; display: flex; gap: 3px; padding: 3px 0 0 3px; }
.sel { width: 97px; height: 21px; background: #fff; display: flex; align-items: center; justify-content: space-between; padding: 0 5px 0 3px; color: #222; }

/* main */
.main { flex: none; height: 533px; display: flex; min-height: 0; background: #fff; position: relative; border-top: 1px solid #9a9c9f; }
.panel { background: #fff; border: 1px solid #c6c8cc; border-top: 0; display: flex; flex-direction: column; }
.pane-bar { height: 12px; background: #d4d6da; position: relative; flex: none; }
.x { position: absolute; right: 3px; top: -2px; color: #888; font-size: 11px; line-height: 14px; font-weight: bold; }
.nav { width: 210px; margin-right: 4px; flex: none; }
.nav-title { height: 22px; background: #eee; color: #999; padding-left: 8px; line-height: 22px; border-bottom: 1px solid #c6c8cc; flex: none; }
.nav-tools { height: 27px; background: #eee; border-bottom: 1px solid #c6c8cc; display: flex; align-items: center; padding: 0 1px 0 7px; flex: none; }
.plus { margin-right: auto; }
.tool-btn { width: 24px; height: 23px; border: 1px solid #6aa7e2; border-radius: 4px; margin-left: 4px; display: flex; align-items: center; justify-content: center; background: #eef4fb; }
.tree { flex: 1; position: relative; padding-top: 2px; background: #fff; }
.t { height: 24px; display: flex; align-items: center; gap: 6px; white-space: nowrap; }
.l1 { padding-left: 3px; }
.l1 svg { width: 15px; }
.l2 { padding-left: 43px; }
.l2 svg { width: 16px; }
.nav-scroll { position: absolute; left: 197px; top: 225px; width: 9px; height: 231px; background: #ccc; border-radius: 5px; }

.mid { width: 280px; flex: none; margin-right: 4px; display: flex; flex-direction: column; }
.comp { height: 304px; flex: none; }
.ptabs { display: flex; height: 23px; background: #eee; flex: none; border-bottom: 1px solid #e4e4e4; }
.ptab { width: 65px; text-align: center; line-height: 22px; color: #999; background: #dfdfdf; font-weight: bold; border-left: 1px solid #ccc; border-right: 1px solid #ccc; }
.ptab.on { color: #333; background: #eee; border: 0; }
.ctools { height: 28px; background: #eee; display: flex; align-items: center; padding-left: 6px; flex: none; }
.ct { display: flex; align-items: center; }
.ct-new { gap: 5px; width: 63px; }
.ct-new .caret { margin-left: 2px; }
.ct-copy { gap: 6px; width: 52px; }
.ct-del { gap: 4px; width: 51px; }
.ct-floor { gap: 5px; }
.csearch { height: 20px; background: #fff; color: #888; padding-left: 2px; line-height: 19px; border-bottom: 1px solid #c6c8cc; flex: none; }
.clist { flex: 1; padding-top: 1px; overflow: hidden; }
.ci { height: 24px; line-height: 24px; margin-left: 40px; padding-left: 3px; width: 151px; white-space: nowrap; }
.ci-on { background: #b3cdee; height: 21px; line-height: 21px; margin: 1px 0 2px 40px; }
.props { flex: 1; margin-top: 4px; border-top: 1px solid #c6c8cc; min-height: 0; }
.props .pane-bar { height: 11px; }
.props .ptabs { height: 22px; }
.tbl-wrap { flex: 1; position: relative; overflow: hidden; background: #fff; }
.tbl { border-collapse: collapse; table-layout: fixed; width: 262px; font-size: 12px; }
.tbl th, .tbl td { border: 1px solid #dcdcdc; height: 21px; padding: 0 0 0 3px; font-weight: normal; white-space: nowrap; overflow: hidden; }
.tbl th { text-align: center; background: #f0f0f0; color: #333; padding: 0; }
.tbl th:nth-child(1) { width: 22px; }
.tbl th:nth-child(2) { width: 100px; }
.tbl th:nth-child(3) { width: 99px; }
.tbl th:nth-child(4) { width: 41px; }
.tbl .hv { background: #7ab6f7; color: #fff; font-weight: bold; border-color: #5aa2ee; }
.tbl .n { background: #f0f0f0; text-align: center; padding: 0; color: #333; }
.tbl .n-on { background: #7ab6f7; color: #fff; font-weight: bold; }
.tbl .link { color: #2f78e0; }
.tbl .c { padding: 0; }
.tbl .c-on { background: #d5e7fb; }
.cb { width: 14px; height: 14px; margin: 0 auto; border: 1px solid #888; border-radius: 3px; background: #fff; display: flex; align-items: center; justify-content: center; }
.cb-on { background: #4a90e2; border-color: #4a90e2; }
.tbl .edit { border: 2px solid #808080; background: #fff; }
.tbl .grp { padding-left: 3px; }
.minus { display: inline-block; width: 12px; height: 12px; border: 1px solid #666; border-radius: 2px; line-height: 9px; text-align: center; margin-right: 6px; vertical-align: -1px; font-size: 11px; }
.tbl .gv { background: #eee; }
.tbl .blank { border: 0; }
.tbl-scroll { position: absolute; left: 267px; top: 39px; width: 9px; height: 86px; background: #ccc; border-radius: 5px; }

.view { flex: 1; background: #000; position: relative; overflow: hidden; }
.canvas { position: absolute; left: 0; top: 0; }
.red path { stroke: #e00000; stroke-width: 1; fill: none; }
.bubble circle { fill: none; stroke: #0a7a0a; stroke-width: 1; }
.bubble-t text { fill: #fff; font: 18px "Liberation Sans", sans-serif; text-anchor: middle; }
.ax { font: 15px "Liberation Sans", sans-serif; text-anchor: middle; }
.ax-y { fill: #00e000; }
.ax-z { fill: #0000ff; }
.ax-x { fill: #f00000; }
.vtools { position: absolute; right: 0; top: 0; width: 33px; height: 224px; background: #9a9b9e; border-left: 1px solid #c0c0c0; }
.v2d { font: 10px "Liberation Sans", sans-serif; fill: #1f2a38; text-anchor: end; }

.dialog { position: absolute; left: 474px; top: 26px; width: 402px; height: 328px; background: #eee; border: 1px solid #d0d0d0; border-top: 0; display: flex; flex-direction: column; z-index: 5; }
.dlg-title { height: 27px; background: #2f80e4; color: #fff; display: flex; align-items: center; justify-content: space-between; padding: 0 9px; flex: none; margin: 0 -1px; }
.dlg-x { font-size: 14px; line-height: 14px; }
.dlg-body { margin: 12px 11px 0; height: 248px; background: #fff; border: 1px solid #b4d2e8; border-top-color: #4a90c0; padding: 3px 4px; color: #222; }
.dlg-foot { display: flex; justify-content: flex-end; padding: 7px 11px 0 0; }
.dlg-btn { width: 75px; height: 22px; background: #2f80e4; color: #fff; border-radius: 3px; text-align: center; line-height: 22px; }

/* status */
.status { height: 30px; flex: none; background: #dcdcdf; border-bottom: 1px solid #fff; display: flex; align-items: center; white-space: nowrap; color: #333; padding-left: 2px; }
.st-xyz { width: 263px; letter-spacing: .8px; }
.st-h { width: 84px; letter-spacing: .3px; }
.st-b { width: 136px; letter-spacing: .5px; }
.st-0 { width: 100px; }
.st-hide { width: 103px; }
.sb { height: 25px; border: 1px solid #aaa; background: #c8c8c8; display: flex; align-items: center; justify-content: center; gap: 6px; flex: none; margin-right: 3px; }
.sb1 { width: 25px; }
.sb2 { width: 36px; background: #fff; border-color: #3a96f0; margin-right: 6px; }
.sb3 { width: 24px; margin-right: 7px; }
.sb4 { width: 36px; }
.sb5 { width: 35px; margin-right: 4px; }
.sb6 { width: 73px; background: #fff; border-color: #3a96f0; margin-right: 3px; }
.sb7 { width: 61px; margin-right: 6px; }
.st-msg { width: 276px; }
.st-fps { letter-spacing: .2px; }

/* taskbar */
.taskbar { flex: none; height: 40px; display: flex; align-items: center; position: relative; padding-left: 8px; color: #fff; overflow: hidden;
  background:
    radial-gradient(ellipse 60px 22px at 420px 20px, #2d6a90 0, transparent 100%),
    radial-gradient(ellipse 170px 40px at 860px 26px, #7486a6 0, transparent 100%),
    linear-gradient(90deg, #11304c 0, #14344f 25%, #1b3f5f 50%, #3f5a7c 60%, #2a4968 78%, #1c3a58 100%); }
.orb { width: 36px; margin-right: 15px; flex: none; }
.tb { width: 59px; height: 38px; margin-right: 3px; flex: none; display: flex; align-items: center; justify-content: center; border: 1px solid rgba(180,200,220,.5); border-radius: 2px; background: linear-gradient(rgba(255,255,255,.28), rgba(255,255,255,.08)); }
.tb-on { background: linear-gradient(rgba(255,255,255,.75), rgba(255,255,255,.45)); }
.tb-t { font: bold 28px "Liberation Sans", sans-serif; fill: #fff; }
.tb-cad { font: bold 13px "Liberation Sans", sans-serif; fill: #fff; }
.tray { position: absolute; left: 990px; top: 0; height: 40px; display: grid; grid-template-columns: 26px repeat(9, 24px); align-items: center; justify-items: center; }
.t-s { justify-self: start; }
.tray-s { font: bold 13px "Liberation Sans", sans-serif; fill: #fff; }
.t-arrow { width: 0; height: 0; border-left: 4px solid transparent; border-right: 4px solid transparent; border-bottom: 5px solid #fff; }
.clock { position: absolute; left: 1240px; top: 1px; width: 106px; display: flex; flex-direction: column; align-items: center; line-height: 19px; }
.show-desk { position: absolute; right: 0; top: 0; width: 14px; height: 40px; background: linear-gradient(#5a6c80, #2c3f55); border: 1px solid #7a8a9a; }
```
